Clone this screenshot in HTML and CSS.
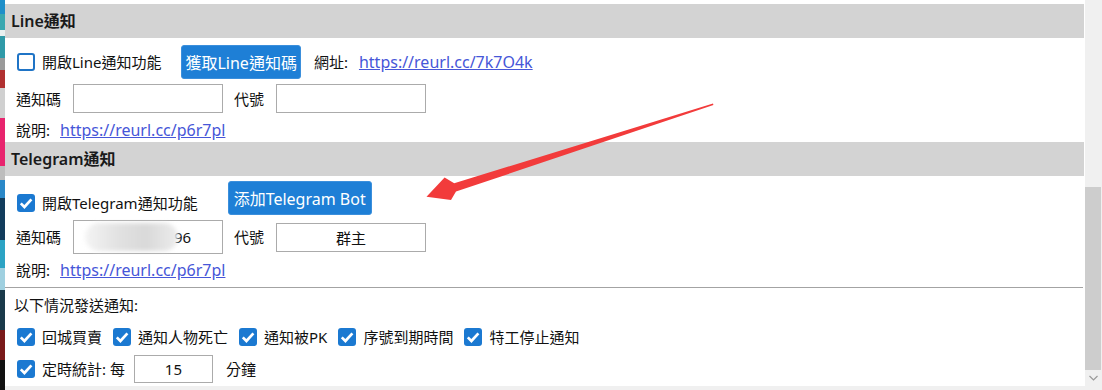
FILE: index.html
```html
<!DOCTYPE html>
<html lang="zh-Hant">
<head>
  <meta charset="UTF-8">
  <title>通知設定</title>
  <link rel="stylesheet" href="styles.css">
</head>
<body>
  <div class="edge"></div>
  <div class="window">
    <div class="screen">
      <div class="panel">
        <div class="section-title">Line通知</div>
        <div class="row row-action">
          <label class="check"><span class="box"></span>開啟Line通知功能</label>
          <button class="btn">獲取Line通知碼</button>
          <span class="url-label">網址:</span>
          <a class="link" href="#">https://reurl.cc/7k7O4k</a>
        </div>
        <div class="row row-fields">
          <span>通知碼</span>
          <input class="field" type="text" value="">
          <span class="code-label">代號</span>
          <input class="field center" type="text" value="">
        </div>
        <div class="row row-note">
          <span>說明:</span>
          <a class="link" href="#">https://reurl.cc/p6r7pl</a>
        </div>

        <div class="section-title second">Telegram通知</div>
        <div class="row row-action">
          <label class="check low"><span class="box on"><svg viewBox="0 0 18 18"><path d="M3.8 9.4l3.6 3.6L14.4 5.4"/></svg></span>開啟Telegram通知功能</label>
          <button class="btn bot">添加Telegram Bot</button>
        </div>
        <div class="row row-fields tall">
          <span>通知碼</span>
          <div class="field blurred"><span class="smudge"></span><span class="tail">96</span></div>
          <span class="code-label">代號</span>
          <input class="field center" type="text" value="群主">
        </div>
        <div class="row row-note">
          <span>說明:</span>
          <a class="link" href="#">https://reurl.cc/p6r7pl</a>
        </div>

        <hr class="divider">

        <div class="notify-title">以下情況發送通知:</div>
        <div class="row row-checks">
          <label class="check"><span class="box on"><svg viewBox="0 0 18 18"><path d="M3.8 9.4l3.6 3.6L14.4 5.4"/></svg></span>回城買賣</label>
          <label class="check"><span class="box on"><svg viewBox="0 0 18 18"><path d="M3.8 9.4l3.6 3.6L14.4 5.4"/></svg></span>通知人物死亡</label>
          <label class="check"><span class="box on"><svg viewBox="0 0 18 18"><path d="M3.8 9.4l3.6 3.6L14.4 5.4"/></svg></span>通知被PK</label>
          <label class="check"><span class="box on"><svg viewBox="0 0 18 18"><path d="M3.8 9.4l3.6 3.6L14.4 5.4"/></svg></span>序號到期時間</label>
          <label class="check"><span class="box on"><svg viewBox="0 0 18 18"><path d="M3.8 9.4l3.6 3.6L14.4 5.4"/></svg></span>特工停止通知</label>
        </div>
        <div class="row row-timer">
          <label class="check"><span class="box on"><svg viewBox="0 0 18 18"><path d="M3.8 9.4l3.6 3.6L14.4 5.4"/></svg></span>定時統計: 每</label>
          <input class="field minutes center" type="text" value="15">
          <span class="unit">分鐘</span>
        </div>

        <!-- annotation arrow drawn over the form -->
        <svg class="arrow" width="1080" height="386" viewBox="0 0 1080 386">
          <polygon points="708,103.6 708.4,105 451,191.6 446,200 421.5,196.8 439.6,177.6 449.2,183.2" fill="#f23b3b"/>
        </svg>
      </div>
      <div class="scrollbar">
        <div class="thumb"></div>
        <div class="scroll-down">
          <svg width="17" height="16" viewBox="0 0 17 16"><polyline points="4.5,6 8.5,10 12.5,6" fill="none" stroke="#9a9a9a" stroke-width="1.2"/></svg>
        </div>
      </div>
    </div>
    <div class="bottom"></div>
  </div>
</body>
</html>
```

FILE: styles.css
```css
body {
  margin: 0;
  display: flex;
  height: 390px;
  overflow: hidden;
  font-family: "Noto Sans", "Noto Sans CJK TC", sans-serif;
  font-size: 15px;
  line-height: 20px;
  color: #111;
  background: #fff;
}
.edge {
  width: 5px;
  flex-shrink: 0;
  background: linear-gradient(to bottom,
    #1f8fc9 0 14px, #3aa7b0 14px 30px, #e8f0f0 30px 36px, #2f9aa8 36px 58px,
    #9a9a9a 58px 70px, #b03030 70px 88px, #d0d0d0 88px 118px, #e8246e 118px 166px,
    #bdbdbd 166px 180px, #2a88c8 180px 198px, #123c5c 198px 240px, #2ca3c4 240px 268px,
    #9fd0e0 268px 290px, #1a3a4a 290px 330px, #7a1a1a 330px 360px, #111 360px);
}
.window {
  flex: 1;
  display: flex;
  flex-direction: column;
}
.screen {
  display: flex;
  height: 386px;
}
.panel {
  flex: 1;
  position: relative;
  padding-top: 4px;
  overflow: hidden;
}
.bottom {
  height: 4px;
  background: #f0f0f0;
}
.scrollbar {
  width: 17px;
  background: #f0f0f0;
  display: flex;
  flex-direction: column;
  justify-content: flex-end;
}
.thumb {
  height: 183px;
  margin-right: 1px;
  background: #cdcdcd;
}
.scroll-down {
  height: 16px;
  display: flex;
}

.section-title {
  height: 34px;
  margin-right: 1px;
  padding-left: 6px;
  display: flex;
  align-items: center;
  background: #d3d3d3;
  font-size: 16px;
  font-weight: 600;
  color: #1a1a1a;
}
.section-title.second {
  margin-top: 2px;
}

.row {
  display: flex;
  align-items: center;
  padding-left: 11px;
}
.row-action {
  margin-top: 7px;
  height: 34px;
}
.section-title.second + .row-action {
  margin-top: 5px;
}
.row-fields {
  margin-top: 5px;
  height: 29px;
}
.row-fields.tall {
  height: 34px;
}
.row-note {
  margin-top: 7px;
}
.row-fields.tall + .row-note {
  margin-top: 6px;
}
.row-checks {
  margin-top: 12px;
  gap: 10px;
}
.row-timer {
  margin-top: 8px;
}

.check {
  display: flex;
  align-items: center;
  gap: 7px;
  padding-left: 1px;
}
.check.low {
  margin-top: 9px;
}
.box {
  width: 18px;
  height: 18px;
  box-sizing: border-box;
  border: 2px solid #1f74c6;
  border-radius: 3px;
  background: #fff;
}
.box.on {
  border: none;
  background: #1b79d1;
}
.box svg {
  display: block;
  width: 18px;
  height: 18px;
  fill: none;
  stroke: #fff;
  stroke-width: 2.7;
}

.btn {
  height: 34px;
  margin-left: 20px;
  padding: 0 3px;
  border: 1px solid #3b8fdc;
  border-radius: 3px;
  background: #1e7fd6;
  color: #fff;
  font-family: inherit;
  font-size: 16px;
}
.btn.bot {
  margin-left: 30px;
  padding: 0 5px;
}
.url-label {
  margin-left: 13px;
}
.link {
  margin-left: 11px;
  color: #4656d8;
  font-size: 16px;
}
.row-note .link {
  margin-left: 10px;
}

.field {
  width: 150px;
  height: 29px;
  box-sizing: border-box;
  margin-left: 12px;
  border: 1px solid #ababab;
  padding: 0 6px;
  font-family: inherit;
  font-size: 15px;
  color: #111;
  background: #fff;
}
.field.center {
  text-align: center;
}
.code-label {
  margin-left: 11px;
}
.blurred {
  height: 34px;
  display: flex;
  align-items: center;
  padding: 0;
}
.smudge {
  position: relative;
  z-index: 1;
  width: 93px;
  height: 28px;
  margin-left: 11px;
  border-radius: 14px;
  background: linear-gradient(90deg, #f4f4f4, #e2e2e2 35%, #d9d9d9 65%, #ececec);
  filter: blur(2px);
}
.tail {
  margin-left: -4px;
}
.minutes {
  width: 79px;
  height: 28px;
  margin-left: 9px;
}
.unit {
  margin-left: 13px;
}

.divider {
  margin: 7px 2px 0 0;
  border: none;
  border-top: 1px solid #a3a3a3;
}
.notify-title {
  margin-top: 7px;
  padding-left: 9px;
}

.arrow {
  position: absolute;
  left: 0;
  top: 0;
  pointer-events: none;
}
```
